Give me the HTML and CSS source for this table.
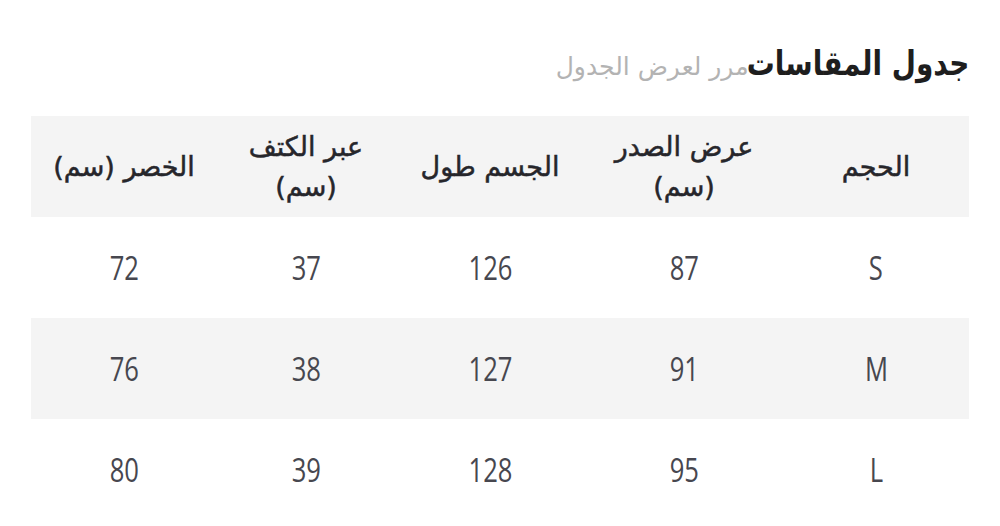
FILE: index.html
```html
<!DOCTYPE html>
<html lang="ar" dir="rtl">
<head>
<meta charset="utf-8">
<link rel="stylesheet" href="styles.css">
</head>
<body>
<div class="page">
  <div class="title-row">
    <h1 class="title">جدول المقاسات</h1>
    <span class="hint">مرر لعرض الجدول</span>
  </div>
  <table class="sizes">
    <colgroup>
      <col class="c1"><col class="c2"><col class="c3"><col class="c4"><col class="c5">
    </colgroup>
    <thead>
      <tr>
        <th>الحجم</th>
        <th>عرض الصدر<br>(سم)</th>
        <th>الجسم طول</th>
        <th>عبر الكتف<br>(سم)</th>
        <th>الخصر (سم)</th>
      </tr>
    </thead>
    <tbody>
      <tr><td><span class="v">S</span></td><td><span class="v">87</span></td><td><span class="v">126</span></td><td><span class="v">37</span></td><td><span class="v">72</span></td></tr>
      <tr class="alt"><td><span class="v">M</span></td><td><span class="v">91</span></td><td><span class="v">127</span></td><td><span class="v">38</span></td><td><span class="v">76</span></td></tr>
      <tr><td><span class="v">L</span></td><td><span class="v">95</span></td><td><span class="v">128</span></td><td><span class="v">39</span></td><td><span class="v">80</span></td></tr>
    </tbody>
  </table>
</div>
</body>
</html>
```
FILE: styles.css
```css
html, body {
  margin: 0;
  padding: 0;
  background: #fff;
}
.page {
  padding: 38px 31px 0 31px;
  font-family: "DejaVu Sans", "Noto Sans", sans-serif;
  color: #333;
}
.title-row {
  display: flex;
  align-items: baseline;
  height: 78px;
}
.title {
  margin: 0 0 0 -51px;
  font-size: 34px;
  line-height: 50px;
  font-weight: bold;
  color: #1e1e1e;
  transform: scaleX(0.82);
  transform-origin: right center;
}
.hint {
  font-size: 25px;
  color: #b3b3b3;
}
.sizes {
  width: 100%;
  border-collapse: collapse;
  table-layout: fixed;
}
.c1 { width: 186px; }
.c2 { width: 198px; }
.c3 { width: 190px; }
.c4 { width: 178px; }
.c5 { width: 186px; }
.sizes th {
  background: #f4f4f4;
  height: 101px;
  font-weight: normal;
  font-size: 27px;
  line-height: 40px;
  color: #26262b;
  text-align: center;
  padding: 0;
  -webkit-text-stroke: 0.5px #26262b;
}
.sizes td {
  height: 101px;
  padding: 0;
  text-align: center;
  font-family: "Open Sans", sans-serif;
  font-size: 32px;
  color: #47474f;
}
.v {
  display: inline-block;
  transform: scaleX(0.8);
}
.sizes tr.alt td {
  background: #f4f4f4;
}
```
